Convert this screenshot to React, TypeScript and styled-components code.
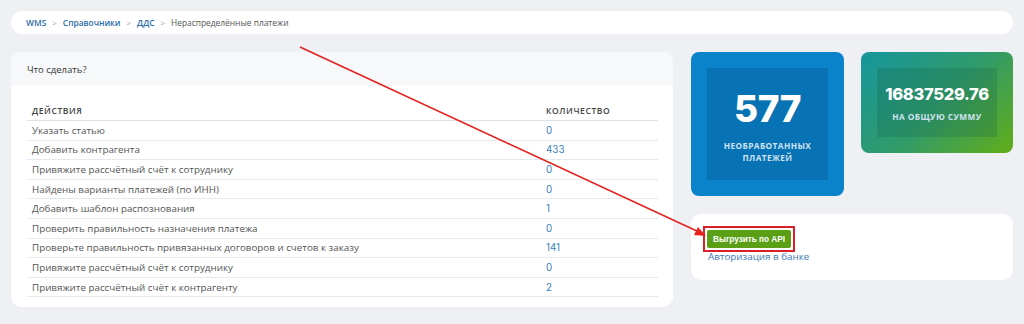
import styled, { createGlobalStyle } from "styled-components"

const GlobalStyle = createGlobalStyle`
    body {
        margin: 0;
        background: #eef0f4;
        font-family: "Open Sans", "Liberation Sans", sans-serif;
    }
`

const actions = [
    { name: "Указать статью", count: 0 },
    { name: "Добавить контрагента", count: 433 },
    { name: "Привяжите рассчётный счёт к сотруднику", count: 0 },
    { name: "Найдены варианты платежей (по ИНН)", count: 0 },
    { name: "Добавить шаблон распознования", count: 1 },
    { name: "Проверить правильность назначения платежа", count: 0 },
    { name: "Проверьте правильность привязанных договоров и счетов к заказу", count: 141 },
    { name: "Привяжите рассчётный счёт к сотруднику", count: 0 },
    { name: "Привяжите рассчётный счёт к контрагенту", count: 2 },
]

const crumbs = ["WMS", "Справочники", "ДДС"]

export default function App() {
    return (
        <Page>
            <GlobalStyle />
            <Breadcrumbs>
                {crumbs.map((c) => (
                    <Crumb key={c}>
                        <CrumbLink>{c}</CrumbLink>
                        <Sep>&gt;</Sep>
                    </Crumb>
                ))}
                <Current>Нераспределённые платежи</Current>
            </Breadcrumbs>

            <Main>
                <TodoCard>
                    <CardHead>Что сделать?</CardHead>
                    <Table>
                        <HeadRow>
                            <HeadCell>Действия</HeadCell>
                            <HeadCell>Количество</HeadCell>
                        </HeadRow>
                        {actions.map((a, i) => (
                            <Row key={i}>
                                <Cell>{a.name}</Cell>
                                <CountCell>{a.count}</CountCell>
                            </Row>
                        ))}
                    </Table>
                </TodoCard>

                <Side>
                    <Stats>
                        <StatCard $variant="blue">
                            <StatInner $variant="blue">
                                <BigNumber>577</BigNumber>
                                <StatLabel>Необработанных платежей</StatLabel>
                            </StatInner>
                        </StatCard>
                        <StatCard $variant="green">
                            <StatInner $variant="green">
                                <SumNumber>16837529.76</SumNumber>
                                <StatLabel $tight>На общую сумму</StatLabel>
                            </StatInner>
                        </StatCard>
                    </Stats>
                    <ApiCard>
                        <Highlight>
                            <ApiButton>Выгрузить по API</ApiButton>
                        </Highlight>
                        <BankLink>Авторизация в банке</BankLink>
                    </ApiCard>
                </Side>
            </Main>

            <Arrow width="1024" height="324" viewBox="0 0 1024 324">
                <line x1="300" y1="47" x2="699" y2="232" stroke="#e2231f" strokeWidth="1.6" />
                <polygon points="706,236 694,235 698,227" fill="#e2231f" />
            </Arrow>
        </Page>
    )
}

const Page = styled.div`
    position: relative;
    width: 1024px;
    height: 324px;
    padding: 11px 11px 0 11px;
    box-sizing: border-box;
    overflow: hidden;
`

const Breadcrumbs = styled.nav`
    height: 23px;
    background: #fff;
    border-radius: 12px;
    display: flex;
    align-items: center;
    padding-left: 15px;
    font-size: 8.4px;
`

const Crumb = styled.span`
    display: flex;
    align-items: center;
`

const CrumbLink = styled.span`
    color: #2d6ea8;
    font-weight: 600;
`

const Sep = styled.span`
    color: #9aa3ad;
    margin: 0 6px;
    font-size: 8px;
`

const Current = styled.span`
    color: #555;
`

const Main = styled.div`
    display: flex;
    gap: 18px;
    margin-top: 18px;
    align-items: flex-start;
`

const TodoCard = styled.section`
    width: 662px;
    background: #fff;
    border-radius: 10px;
    overflow: hidden;
    padding-bottom: 10px;
`

const CardHead = styled.div`
    background: #f7f8fa;
    height: 34px;
    display: flex;
    align-items: center;
    padding-left: 16px;
    font-size: 9.5px;
    color: #333;
`

const Table = styled.div`
    margin: 15px 15px 0 16px;
`

const HeadRow = styled.div`
    display: grid;
    grid-template-columns: 1fr 117px;
    height: 19px;
    align-items: center;
    border-bottom: 1px solid #dfe3e8;
`

const HeadCell = styled.div`
    padding-left: 5px;
    font-size: 8.5px;
    font-weight: 600;
    letter-spacing: 0.6px;
    text-transform: uppercase;
    color: #444;
`

const Row = styled.div`
    display: grid;
    grid-template-columns: 1fr 117px;
    height: 18.6px;
    align-items: center;
    border-bottom: 1px solid #e6e9ed;
`

const Cell = styled.div`
    padding-left: 5px;
    font-size: 9.8px;
    color: #555;
    white-space: nowrap;
`

const CountCell = styled.div`
    padding-left: 5px;
    font-family: "Inter", "Liberation Sans", sans-serif;
    font-size: 9.8px;
    color: #3a7fc0;
`

const Side = styled.div`
    width: 322px;
    display: flex;
    flex-direction: column;
    gap: 18px;
`

const Stats = styled.div`
    display: flex;
    gap: 17px;
    align-items: flex-start;
`

const StatCard = styled.div<{ $variant: "blue" | "green" }>`
    width: ${({ $variant }) => ($variant === "blue" ? "153px" : "152px")};
    height: ${({ $variant }) => ($variant === "blue" ? "144px" : "101px")};
    border-radius: 8px;
    padding: 16px;
    box-sizing: border-box;
    background: ${({ $variant }) =>
        $variant === "blue"
            ? "#0a83ca"
            : "linear-gradient(135deg, #16969d 0%, #2f9a6c 50%, #62ad18 100%)"};
`

const StatInner = styled.div<{ $variant: "blue" | "green" }>`
    height: 100%;
    display: flex;
    flex-direction: column;
    align-items: center;
    justify-content: center;
    background: ${({ $variant }) => ($variant === "blue" ? "#0773b4" : "rgba(20, 90, 70, 0.22)")};
    color: #fff;
    text-align: center;
`

const BigNumber = styled.div`
    font-family: "Inter", "Liberation Sans", sans-serif;
    font-weight: 800;
    font-size: 37px;
    line-height: 42px;
    margin-top: 4px;
    letter-spacing: -0.5px;
`

const SumNumber = styled.div`
    font-family: "Inter", "Liberation Sans", sans-serif;
    font-weight: 800;
    font-size: 16.5px;
    line-height: 20px;
    margin-top: 2px;
    letter-spacing: -0.3px;
`

const StatLabel = styled.div<{ $tight?: boolean }>`
    margin-top: ${({ $tight }) => ($tight ? "7px" : "10px")};
    font-size: 8.3px;
    font-weight: 700;
    line-height: 12px;
    letter-spacing: 0.4px;
    text-transform: uppercase;
    color: #cfe2f1;
    max-width: 110px;
`

const ApiCard = styled.div`
    background: #fff;
    border-radius: 10px;
    height: 66px;
    box-sizing: border-box;
    padding: 12px 12px 0 12px;
    display: flex;
    flex-direction: column;
    align-items: flex-start;
`

const Highlight = styled.div`
    border: 2px solid #d9212a;
    padding: 2px;
`

const ApiButton = styled.button`
    display: block;
    border: none;
    border-radius: 2px;
    background: #5b9f17;
    color: #fff;
    font-family: "Liberation Sans", sans-serif;
    font-weight: 700;
    font-size: 8.2px;
    height: 18px;
    padding: 0 6px;
`

const BankLink = styled.a`
    margin-top: -1px;
    margin-left: 5px;
    font-size: 9.8px;
    line-height: 11px;
    color: #3d78b5;
    text-decoration: none;
`

const Arrow = styled.svg`
    position: absolute;
    left: 0;
    top: 0;
    pointer-events: none;
`
